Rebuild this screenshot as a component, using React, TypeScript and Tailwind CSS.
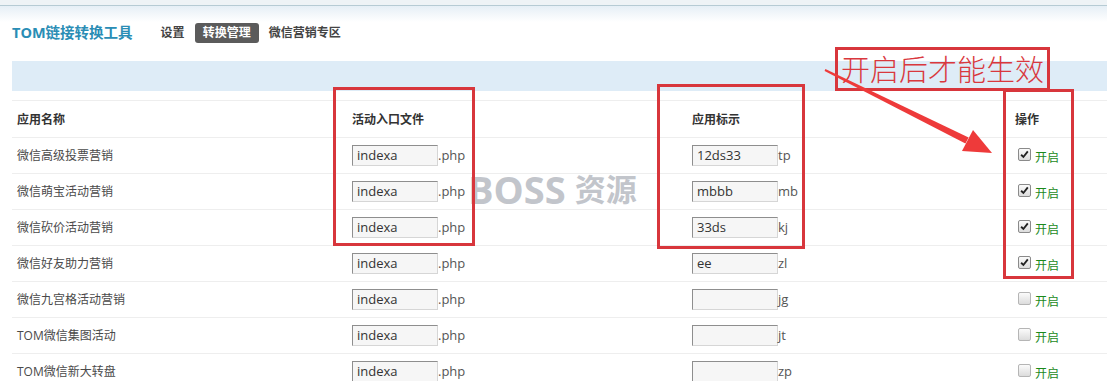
import React from "react";

const rows = [
  { name: "微信高级投票营销", file: "indexa", mark: "12ds33", suffix: "tp", on: true },
  { name: "微信萌宝活动营销", file: "indexa", mark: "mbbb", suffix: "mb", on: true },
  { name: "微信砍价活动营销", file: "indexa", mark: "33ds", suffix: "kj", on: true },
  { name: "微信好友助力营销", file: "indexa", mark: "ee", suffix: "zl", on: true },
  { name: "微信九宫格活动营销", file: "indexa", mark: "", suffix: "jg", on: false },
  { name: "TOM微信集图活动", file: "indexa", mark: "", suffix: "jt", on: false },
  { name: "TOM微信新大转盘", file: "indexa", mark: "", suffix: "zp", on: false },
];

const font = { fontFamily: '"Open Sans", "Noto Sans CJK SC", sans-serif' };

const Field = ({ value }: { value: string }) => (
  <div className="flex h-[21px] w-[86px] items-center border border-t-[#8e8e8e] border-l-[#8e8e8e] border-r-[#d6d6d6] border-b-[#d6d6d6] bg-[#f6f6f6] pl-[4px] text-[13px] text-[#333]">
    {value}
  </div>
);

const Check = ({ on }: { on: boolean }) => (
  <span
    className={`relative mt-[-6px] ml-[8px] inline-block h-[13px] w-[13px] rounded-[2px] border bg-[linear-gradient(#fbfbfb,#dcdcdc)] ${
      on ? "border-[#8a8a8a]" : "border-[#b5b5b5]"
    }`}
  >
    {on && (
      <svg viewBox="0 0 13 13" className="absolute inset-0 h-full w-full">
        <path d="M2.5 6.8 L5.2 9.4 L10.4 2.8" fill="none" stroke="#222" strokeWidth="2.2" />
      </svg>
    )}
  </span>
);

export default function App() {
  return (
    <div className="relative h-[381px] w-[1107px] overflow-hidden bg-white" style={font}>
      <div className="h-[6px] border-b border-[#b6cbd4] bg-[#eef3f6]" />
      <div className="bg-[linear-gradient(#e6eff6,#fff_16px)] pl-3 pt-[17px]">
        <div className="flex h-[20px] items-center">
          <span className="text-[14.5px] font-bold text-[#2a8db5]">TOM链接转换工具</span>
          <span className="ml-[28px] text-[12px] font-bold text-[#444]">设置</span>
          <span className="ml-[10px] flex h-[20px] items-center rounded-[3px] bg-[#5b5b5b] px-[8px] text-[12px] font-bold text-white">
            转换管理
          </span>
          <span className="ml-[10px] text-[12px] font-bold text-[#444]">微信营销专区</span>
        </div>
      </div>

      <div className="ml-3 mt-[18px] h-[30px] bg-[#deecf7]" />

      <div className="ml-3 mt-[9px] text-[12px] text-[#4a4a4a]">
        <div className="grid h-[38px] grid-cols-[335px_340px_323px_1fr] items-center border-y border-[#eeeeee] font-bold text-[#333]">
          <div className="pl-[5px] pt-[2px]">应用名称</div>
          <div className="pl-[5px] pt-[2px]">活动入口文件</div>
          <div className="pl-[5px] pt-[2px]">应用标示</div>
          <div className="pl-[5px] pt-[2px]">操作</div>
        </div>
        {rows.map((r) => (
          <div
            key={r.name}
            className="grid h-[36px] grid-cols-[335px_340px_323px_1fr] items-center border-b border-[#eeeeee]"
          >
            <div className="pl-[5px]">{r.name}</div>
            <div className="flex items-center pl-[5px]">
              <Field value={r.file} />
              <span className="text-[13px] text-[#555]">.php</span>
            </div>
            <div className="flex items-center pl-[5px]">
              <Field value={r.mark} />
              <span className="text-[13px] text-[#555]">{r.suffix}</span>
            </div>
            <div className="flex items-center pt-[4px]">
              <Check on={r.on} />
              <span className="ml-[4px] text-[12px] text-[#1b8a1b]">开启</span>
            </div>
          </div>
        ))}
      </div>

      {/* watermark */}
      <div className="pointer-events-none absolute left-[468px] top-[170px] flex items-center text-[#c2c5cb]">
        <span className="text-[38px] font-bold leading-none">BOSS</span>
        <span className="ml-[9px] text-[31px] font-bold leading-none">资源</span>
      </div>

      {/* annotations */}
      <div className="pointer-events-none absolute left-[333px] top-[87px] h-[159px] w-[142px] border-[3px] border-[#d8363c]" />
      <div className="pointer-events-none absolute left-[657px] top-[84px] h-[165px] w-[148px] border-[3px] border-[#d8363c]" />
      <div className="pointer-events-none absolute left-[1003px] top-[89px] h-[190px] w-[71px] border-[3px] border-[#d8363c]" />
      <div className="pointer-events-none absolute left-[835px] top-[47px] flex h-[44px] w-[215px] items-center justify-center border-[3px] border-[#d8363c]">
        <span className="text-[29px] font-light leading-none text-[#d9383e]">开启后才能生效</span>
      </div>
      <svg className="pointer-events-none absolute left-0 top-0" width="1107" height="381" viewBox="0 0 1107 381">
        <polygon points="824.6,70.9 825.4,69.1 968.6,137.4 965.4,143.6" fill="#ee3a3a" />
        <polygon points="992,153 962,151 973,130" fill="#ee3a3a" />
      </svg>
    </div>
  );
}
